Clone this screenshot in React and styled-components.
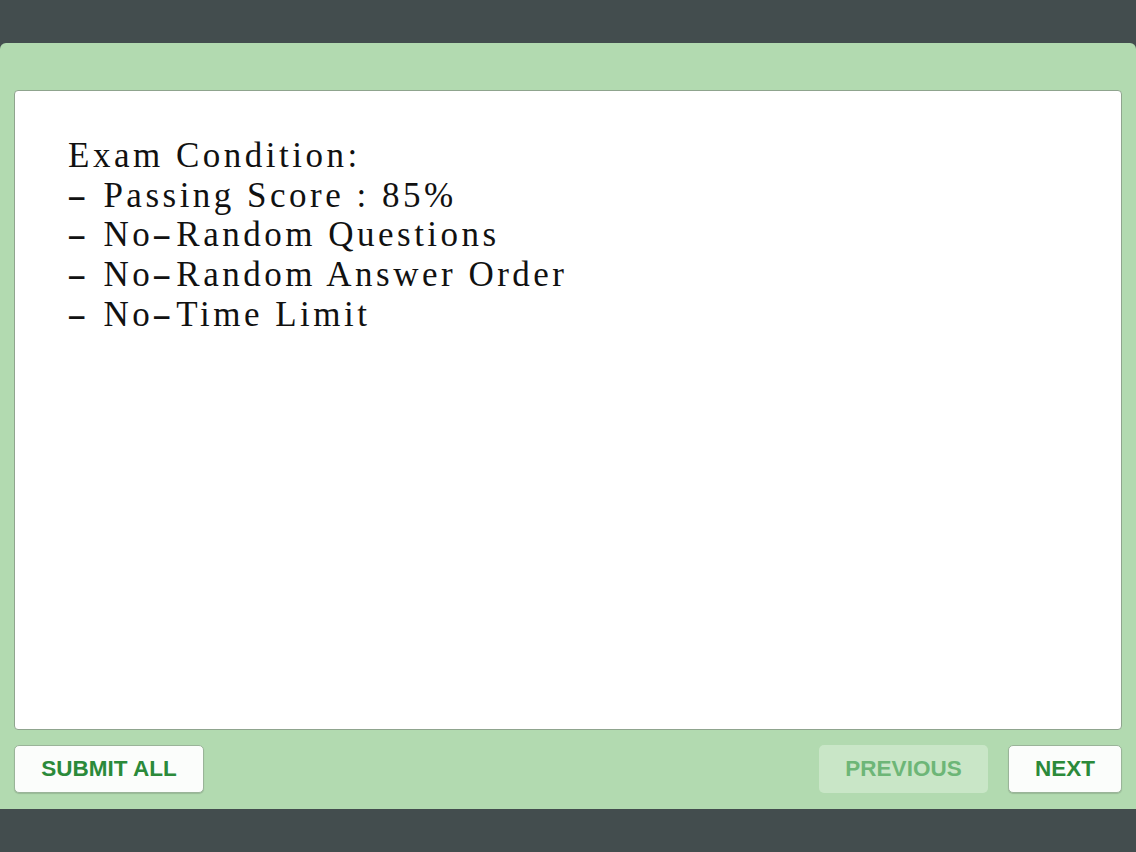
import React from "react";
import styled, { createGlobalStyle } from "styled-components";

const Global = createGlobalStyle`
  html, body { margin: 0; padding: 0; height: 100%; }
  body { background: #434d4e; }
  #root { height: 100%; }
`;

const Page = styled.div`
  width: 1136px;
  height: 852px;
  background: #434d4e;
  padding-top: 43px;
  box-sizing: border-box;
`;

const Frame = styled.div`
  width: 1136px;
  height: 766px;
  background: #b2dab0;
  border-radius: 6px 6px 0 0;
  box-sizing: border-box;
  padding: 47px 14px 0 14px;
  display: flex;
  flex-direction: column;
`;

const Content = styled.div`
  height: 640px;
  background: #ffffff;
  border: 1px solid #8fa48e;
  border-radius: 4px;
  box-sizing: border-box;
  padding: 45px 0 0 53px;
`;

const Line = styled.div`
  font-family: "Liberation Serif", "Noto Sans CJK KR", serif;
  font-size: 35px;
  line-height: 39.7px;
  letter-spacing: 3.5px;
  color: #111;
  white-space: pre;
`;

const Hyphen = styled.span`
  display: inline-block;
  transform: scaleX(1.7);
  margin: 0 4px;
`;

const Footer = styled.div`
  display: flex;
  align-items: center;
  margin-top: 15px;
  gap: 20px;
`;

const Spacer = styled.div`
  flex: 1;
`;

const Button = styled.button`
  height: 48px;
  width: ${(p) => p.$w}px;
  border-radius: 5px;
  box-sizing: border-box;
  font-family: "Liberation Sans", Arial, sans-serif;
  font-weight: 700;
  font-size: 22.5px;
  letter-spacing: 0px;
  padding: 0;
  cursor: pointer;
  background: ${(p) => (p.$disabled ? "#c9e6c7" : "#fbfdfb")};
  color: ${(p) => (p.$disabled ? "#6db677" : "#2b8a3a")};
  border: ${(p) => (p.$disabled ? "none" : "1px solid #9ab499")};
  box-shadow: ${(p) => (p.$disabled ? "none" : "0 1px 1px rgba(0,0,0,0.15)")};
`;

const lines = [
  "Exam Condition:",
  "- Passing Score : 85%",
  "- No-Random Questions",
  "- No-Random Answer Order",
  "- No-Time Limit",
];

function renderLine(text) {
  const parts = text.split("-");
  const out = [];
  parts.forEach((p, i) => {
    if (i > 0) out.push(<Hyphen key={"h" + i}>-</Hyphen>);
    if (p) out.push(<React.Fragment key={"t" + i}>{p}</React.Fragment>);
  });
  return out;
}

export default function App() {
  return (
    <>
      <Global />
      <Page>
        <Frame>
          <Content>
            {lines.map((l) => (
              <Line key={l}>{renderLine(l)}</Line>
            ))}
          </Content>
          <Footer>
            <Button $w={190}>SUBMIT ALL</Button>
            <Spacer />
            <Button $w={169} $disabled>
              PREVIOUS
            </Button>
            <Button $w={114}>NEXT</Button>
          </Footer>
        </Frame>
      </Page>
    </>
  );
}
